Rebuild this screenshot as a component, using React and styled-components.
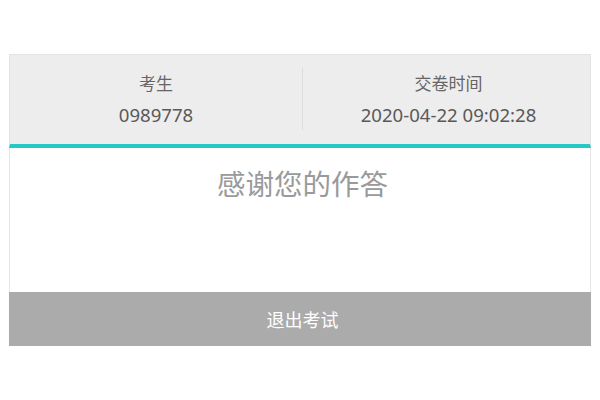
import styled, { createGlobalStyle } from "styled-components";

const GlobalStyle = createGlobalStyle`
  html, body {
    margin: 0;
    padding: 0;
    background: #fff;
  }
  body {
    font-family: "Noto Sans", "Noto Sans CJK SC", sans-serif;
  }
`;

const Page = styled.div`
  width: 600px;
  height: 400px;
  padding: 54px 9px 0;
  box-sizing: border-box;
`;
const Card = styled.div`
  width: 582px;
`;
const Header = styled.div`
  display: grid;
  grid-template-columns: 292px 1fr;
  background: #ededed;
  border: 1px solid #e3e3e3;
  border-bottom: 4px solid #26c8c5;
  padding: 13px 0 14px;
`;
const Column = styled.div`
  display: flex;
  flex-direction: column;
  align-items: center;
  padding-left: ${({ $divided }) => ($divided ? "4px" : "0")};
  border-left: ${({ $divided }) => ($divided ? "1px solid #dcdcdc" : "none")};
`;
const Label = styled.div`
  font-size: 17px;
  line-height: 31px;
  color: #666;
`;
const Value = styled.div`
  font-size: 18.6px;
  line-height: 31px;
  color: #595959;
`;
const Body = styled.div`
  height: 144px;
  box-sizing: border-box;
  border-left: 1px solid #e6e6e6;
  border-right: 1px solid #e6e6e6;
  padding: 16px 0 0 5px;
  text-align: center;
`;
const Thanks = styled.div`
  font-size: 28.5px;
  line-height: 40px;
  color: #9a9a9a;
`;
const ExitButton = styled.button`
  display: block;
  width: 100%;
  height: 54px;
  border: none;
  padding: 0 0 0 5px;
  background: #ababab;
  color: #fff;
  font-family: inherit;
  font-size: 18px;
  cursor: pointer;
`;

const App = () => (
  <Page>
    <GlobalStyle />
    <Card>
      <Header>
        <Column>
          <Label>考生</Label>
          <Value>0989778</Value>
        </Column>
        <Column $divided>
          <Label>交卷时间</Label>
          <Value>2020-04-22 09:02:28</Value>
        </Column>
      </Header>
      <Body>
        <Thanks>感谢您的作答</Thanks>
      </Body>
      <ExitButton>退出考试</ExitButton>
    </Card>
  </Page>
);

export default App;
